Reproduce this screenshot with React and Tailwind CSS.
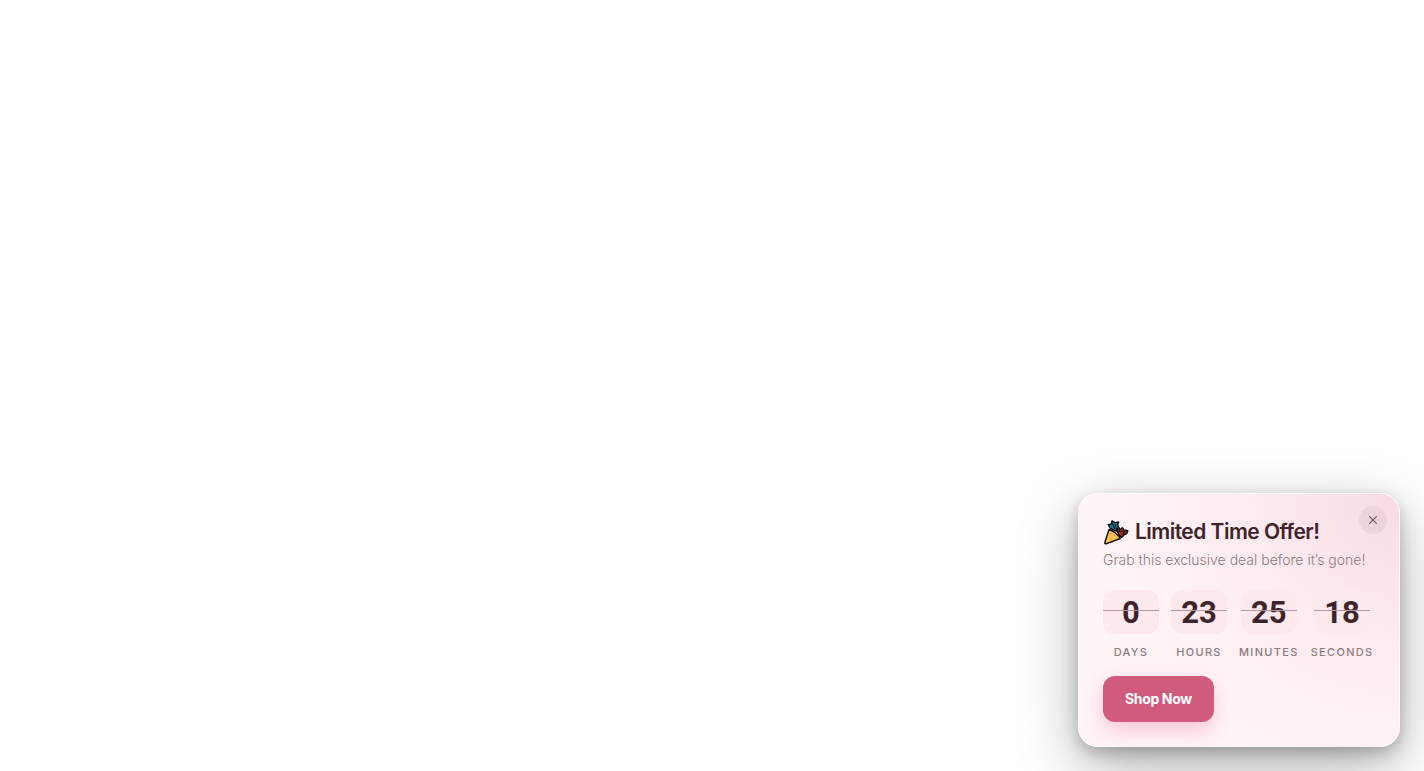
import React from "react";

const units = [
  { label: "Days", value: 0 },
  { label: "Hours", value: 23 },
  { label: "Minutes", value: 25 },
  { label: "Seconds", value: 18 },
];

function PartyIcon() {
  return (
    <svg
      className="w-[26px] h-[26px] shrink-0"
      viewBox="0 0 26 26"
      stroke="#0b0b0b"
      strokeWidth="1.4"
      strokeLinejoin="round"
      strokeLinecap="round"
      aria-hidden="true"
    >
      <path d="M7.5 9.5L5.2 5.6l3-.4L9 1.9l2.8 1.8L15.600 3l-1 3.200 1.600 3-3 2.800z" fill="#167f96" />
      <path d="M9.300 4.500l2.700 5.500M12.500 5.500l-.5 3" fill="none" strokeWidth="1" />
      <path d="M14.500 12.800l-.8-3.500 3.400 1.200 2.200-1.800 1.700 2.300 3.900.8-1.300 2.800-2.200.9-2.800 2.900-2.400-2z" fill="#a92c22" />
      <path d="M13.700 9.300l3.400 1.200-1.600 2.300z" fill="#5b3a86" strokeWidth="1" />
      <path d="M17 13l3.500-1M20 15.500l1.300-3" fill="none" strokeWidth="1" />
      <path d="M6 10.500c4.200 1.400 9 5.200 11.300 9L3 24.800c-.8.200-1.300-.3-1.200-1z" fill="#fcc550" />
      <path d="M7.800 14.800h.1M11.300 16.200h.1M8 19.500h.1" fill="none" stroke="#e8743c" strokeWidth="1.500" />
    </svg>
  );
}

function CloseIcon() {
  return (
    <svg
      className="w-2 h-2"
      fill="none"
      stroke="currentColor"
      strokeWidth="1.2"
      strokeLinecap="round"
      viewBox="0 0 8 8"
    >
      <path d="M0.600 0.600l6.800 6.800M7.400 0.600l-6.800 6.800" />
    </svg>
  );
}

function TimeUnit({ label, value }) {
  return (
    <div className="flex flex-col items-center">
      <div className="relative w-14 h-11 rounded-xl bg-[#fde8ed] flex items-center justify-center">
        <span className="font-[Roboto,sans-serif] text-[31px] leading-none font-bold text-[#3f232b]">
          {value}
        </span>
        <span className="absolute inset-x-0 top-5 h-px bg-[#b5989f]" />
      </div>
      <span className="mt-2.5 text-[11px] leading-4 font-medium uppercase tracking-[0.12em] text-[#8d7b80]">
        {label}
      </span>
    </div>
  );
}

export default function App() {
  return (
    <main className="min-h-screen flex items-end justify-end p-6 bg-white font-[Inter,sans-serif]">
      <section
        className="relative w-full max-w-[322px] p-6 rounded-[20px] border border-white/60
          bg-[radial-gradient(circle_at_top_right,#f9dbe3_0%,#fdebef_36%,#fff4f6_70%)]
          shadow-[0_20px_60px_rgba(0,0,0,0.3),0_6px_16px_rgba(0,0,0,0.22)]"
      >
        <button
          type="button"
          aria-label="Close"
          className="absolute top-3 right-3 w-7 h-7 rounded-full bg-[#efd3db] text-[#715a61] flex items-center justify-center"
        >
          <CloseIcon />
        </button>

        <h2 className="flex items-center gap-1.5 whitespace-nowrap text-[21px] leading-7 font-semibold tracking-tight text-[#3f232b]">
          <PartyIcon />
          Limited Time Offer!
        </h2>
        <p className="mt-1 whitespace-nowrap text-sm leading-5 font-light text-[#92797f]">
          Grab this exclusive deal before it’s gone!
        </p>

        <div className="mt-5 flex gap-3">
          {units.map((unit) => (
            <TimeUnit key={unit.label} label={unit.label} value={unit.value} />
          ))}
        </div>

        <button
          type="button"
          className="mt-4 h-[46px] px-[22px] rounded-xl bg-[#d05b7c] text-white text-sm font-bold tracking-tight
            shadow-[0_8px_20px_rgba(225,80,125,0.28)]"
        >
          Shop Now
        </button>
      </section>
    </main>
  );
}
